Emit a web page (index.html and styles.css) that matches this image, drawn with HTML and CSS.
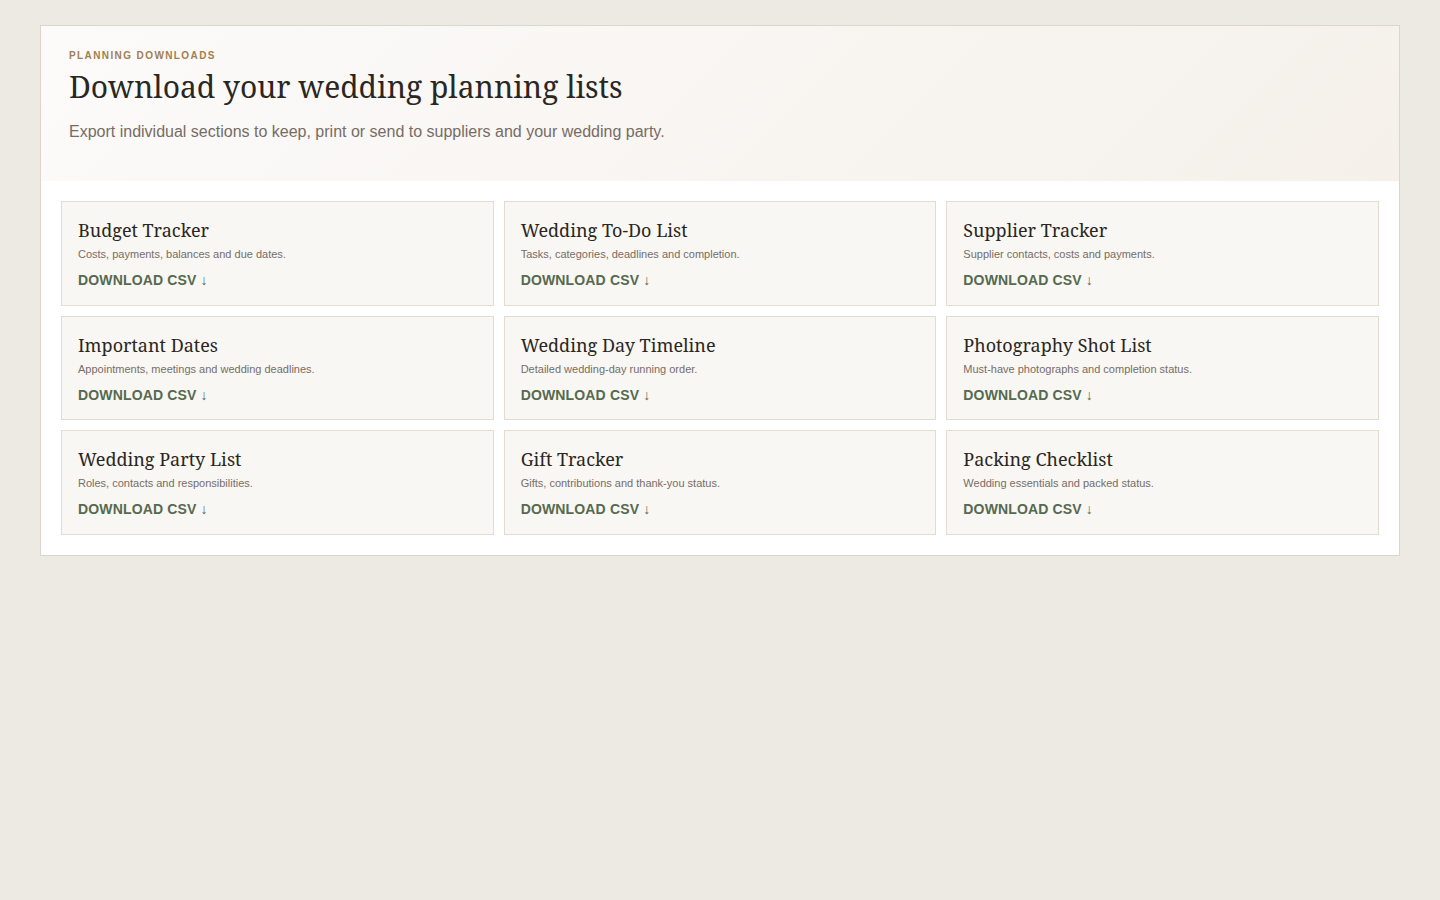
FILE: index.html
```html
<!DOCTYPE html>
<html lang="en">
<head>
<meta charset="utf-8">
<title>Planning Downloads</title>
<link rel="stylesheet" href="styles.css">
</head>
<body>
<main class="panel">
  <header class="hero">
    <p class="eyebrow">Planning downloads</p>
    <h1 class="title">Download your wedding planning lists</h1>
    <p class="lede">Export individual sections to keep, print or send to suppliers and your wedding party.</p>
  </header>
  <section class="grid">
    <article class="card">
      <h2 class="card-title">Budget Tracker</h2>
      <p class="card-desc">Costs, payments, balances and due dates.</p>
      <a class="card-link" href="#">Download CSV ↓</a>
    </article>
    <article class="card">
      <h2 class="card-title">Wedding To-Do List</h2>
      <p class="card-desc">Tasks, categories, deadlines and completion.</p>
      <a class="card-link" href="#">Download CSV ↓</a>
    </article>
    <article class="card">
      <h2 class="card-title">Supplier Tracker</h2>
      <p class="card-desc">Supplier contacts, costs and payments.</p>
      <a class="card-link" href="#">Download CSV ↓</a>
    </article>
    <article class="card">
      <h2 class="card-title">Important Dates</h2>
      <p class="card-desc">Appointments, meetings and wedding deadlines.</p>
      <a class="card-link" href="#">Download CSV ↓</a>
    </article>
    <article class="card">
      <h2 class="card-title">Wedding Day Timeline</h2>
      <p class="card-desc">Detailed wedding-day running order.</p>
      <a class="card-link" href="#">Download CSV ↓</a>
    </article>
    <article class="card">
      <h2 class="card-title">Photography Shot List</h2>
      <p class="card-desc">Must-have photographs and completion status.</p>
      <a class="card-link" href="#">Download CSV ↓</a>
    </article>
    <article class="card">
      <h2 class="card-title">Wedding Party List</h2>
      <p class="card-desc">Roles, contacts and responsibilities.</p>
      <a class="card-link" href="#">Download CSV ↓</a>
    </article>
    <article class="card">
      <h2 class="card-title">Gift Tracker</h2>
      <p class="card-desc">Gifts, contributions and thank-you status.</p>
      <a class="card-link" href="#">Download CSV ↓</a>
    </article>
    <article class="card">
      <h2 class="card-title">Packing Checklist</h2>
      <p class="card-desc">Wedding essentials and packed status.</p>
      <a class="card-link" href="#">Download CSV ↓</a>
    </article>
  </section>
</main>
</body>
</html>
```
FILE: styles.css
```css
* { box-sizing: border-box; }
html, body { margin: 0; padding: 0; }
body {
  background: #ede9e3;
  font-family: "Liberation Sans", Arial, sans-serif;
  padding: 25px 40px;
}
.panel {
  background: #fff;
  border: 1px solid #ddd5cb;
}
.hero {
  background: linear-gradient(135deg, #fcfbfa 0%, #f5f0ea 100%);
  padding: 24px 28px 38px;
}
.eyebrow {
  margin: 0;
  font-size: 10px;
  font-weight: 700;
  letter-spacing: 1.4px;
  text-transform: uppercase;
  color: #a0804f;
  line-height: 12px;
}
.title {
  margin: 7px 0 0;
  font-family: "Noto Serif", "DejaVu Serif", Georgia, serif;
  font-weight: 400;
  font-size: 30px;
  line-height: 36px;
  color: #2a2622;
}
.lede {
  margin: 16px 0 0;
  font-size: 16px;
  line-height: 22px;
  color: #766c64;
}
.grid {
  display: grid;
  grid-template-columns: repeat(3, 1fr);
  gap: 10px;
  padding: 20px;
}
.card {
  background: #f9f7f3;
  border: 1px solid #e2dbd1;
  padding: 15px 16px 15.5px;
}
.card-title {
  margin: 0;
  font-family: "Noto Serif", "DejaVu Serif", Georgia, serif;
  font-weight: 400;
  font-size: 18px;
  line-height: 26px;
  color: #2a2622;
}
.card-desc {
  margin: 4px 0 0;
  font-size: 11px;
  line-height: 14px;
  color: #776d66;
}
.card-link {
  display: inline-block;
  margin-top: 10px;
  font-size: 14px;
  line-height: 18px;
  font-weight: 700;
  letter-spacing: 0.15px;
  text-transform: uppercase;
  color: #556a4f;
  text-decoration: none;
}
```
